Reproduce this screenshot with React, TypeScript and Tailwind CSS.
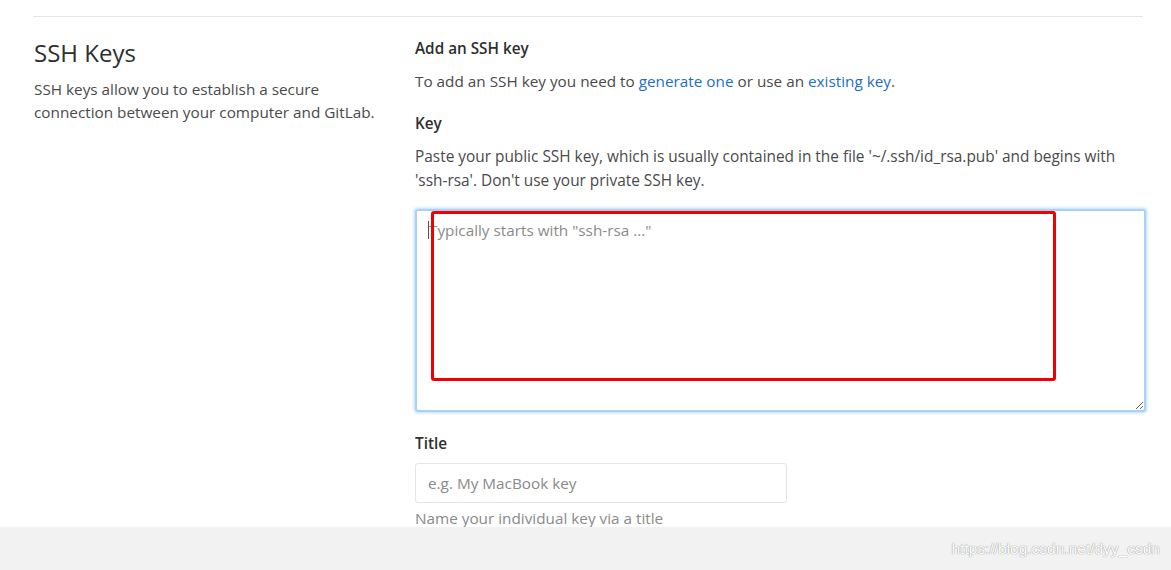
import React from "react";

const font = { fontFamily: '"Segoe UI", "Open Sans", "Noto Sans", sans-serif' };

const App: React.FC = () => {
  return (
    <div className="w-[1171px] h-[570px] bg-white overflow-hidden flex flex-col text-[#2e2e2e]" style={font}>
      {/* Page body */}
      <div className="h-[527px] overflow-hidden px-[33px] pt-[16px]">
        <div className="w-[1110px] border-t border-[#e5e5e5]" />
        <div className="flex pt-[20px]">
          {/* Left column */}
          <div className="w-[382px] pl-[1px] shrink-0">
            <h4 className="text-[24px] leading-[32px] font-normal text-[#2e2e2e]">SSH Keys</h4>
            <p className="mt-[9px] text-[15.3px] leading-[23px] text-[#4a4a4a]">
              SSH keys allow you to establish a secure
              <br />
              connection between your computer and GitLab.
            </p>
          </div>

          {/* Right column */}
          <div className="flex-1">
            <h5 className="text-[15.3px] leading-[22px] font-semibold text-[#2e2e2e]">Add an SSH key</h5>
            <p className="mt-[11px] text-[15.3px] leading-[22px] text-[#4a4a4a]">
              To add an SSH key you need to <a className="text-[#1b6fc4]">generate one</a> or use an{" "}
              <a className="text-[#1b6fc4]">existing key</a>.
            </p>

            <label className="block mt-[20px] text-[15.3px] leading-[22px] font-semibold text-[#2e2e2e]">Key</label>
            <p className="mt-[11px] text-[15.4px] leading-[24px] text-[#4a4a4a]">
              Paste your public SSH key, which is usually contained in the file '~/.ssh/id_rsa.pub' and begins with
              <br />
              'ssh-rsa'. Don't use your private SSH key.
            </p>

            <div className="relative mt-[16px] w-[731px]">
              <textarea
                className="block w-full h-[203px] rounded-[3px] border-2 border-[#a9d0f5] shadow-[0_0_3px_1px_rgba(128,189,255,0.55)] px-[12px] py-[8px] text-[15.3px] leading-[22px] text-[#4a4a4a] placeholder:text-[#8a8a8a] outline-none"
                placeholder={'Typically starts with "ssh-rsa ..."'}
                style={font}
              />
              {/* caret */}
              <div className="absolute left-[13px] top-[12px] w-[1px] h-[18px] bg-[#555]" />
              {/* annotation box */}
              <div className="absolute left-[16px] top-[2px] w-[625px] h-[170px] border-[3px] border-[#f00000] rounded-[3px] pointer-events-none" />
            </div>

            <label className="block mt-[20px] text-[15.3px] leading-[22px] font-semibold text-[#2e2e2e]">Title</label>
            <input
              className="block mt-[9px] w-[372px] h-[40px] rounded-[3px] border border-[#e5e5e5] px-[12px] text-[15.3px] text-[#4a4a4a] placeholder:text-[#8a8a8a] outline-none"
              placeholder="e.g. My MacBook key"
              style={font}
            />
            <p className="mt-[5px] text-[15.3px] leading-[20px] text-[#8a8a8a]">Name your individual key via a title</p>
          </div>
        </div>
      </div>

      {/* Footer band with watermark */}
      <div className="h-[43px] bg-[#f2f2f2] flex items-center justify-end pr-[11px]">
        <span
          className="text-[15.5px] text-white [text-shadow:0_0_1px_#9a9a9a,0_0_1px_#9a9a9a]"
          style={{ fontFamily: '"Liberation Sans", Arial, sans-serif' }}
        >
          https://blog.csdn.net/dyy_csdn
        </span>
      </div>
    </div>
  );
};

export default App;
